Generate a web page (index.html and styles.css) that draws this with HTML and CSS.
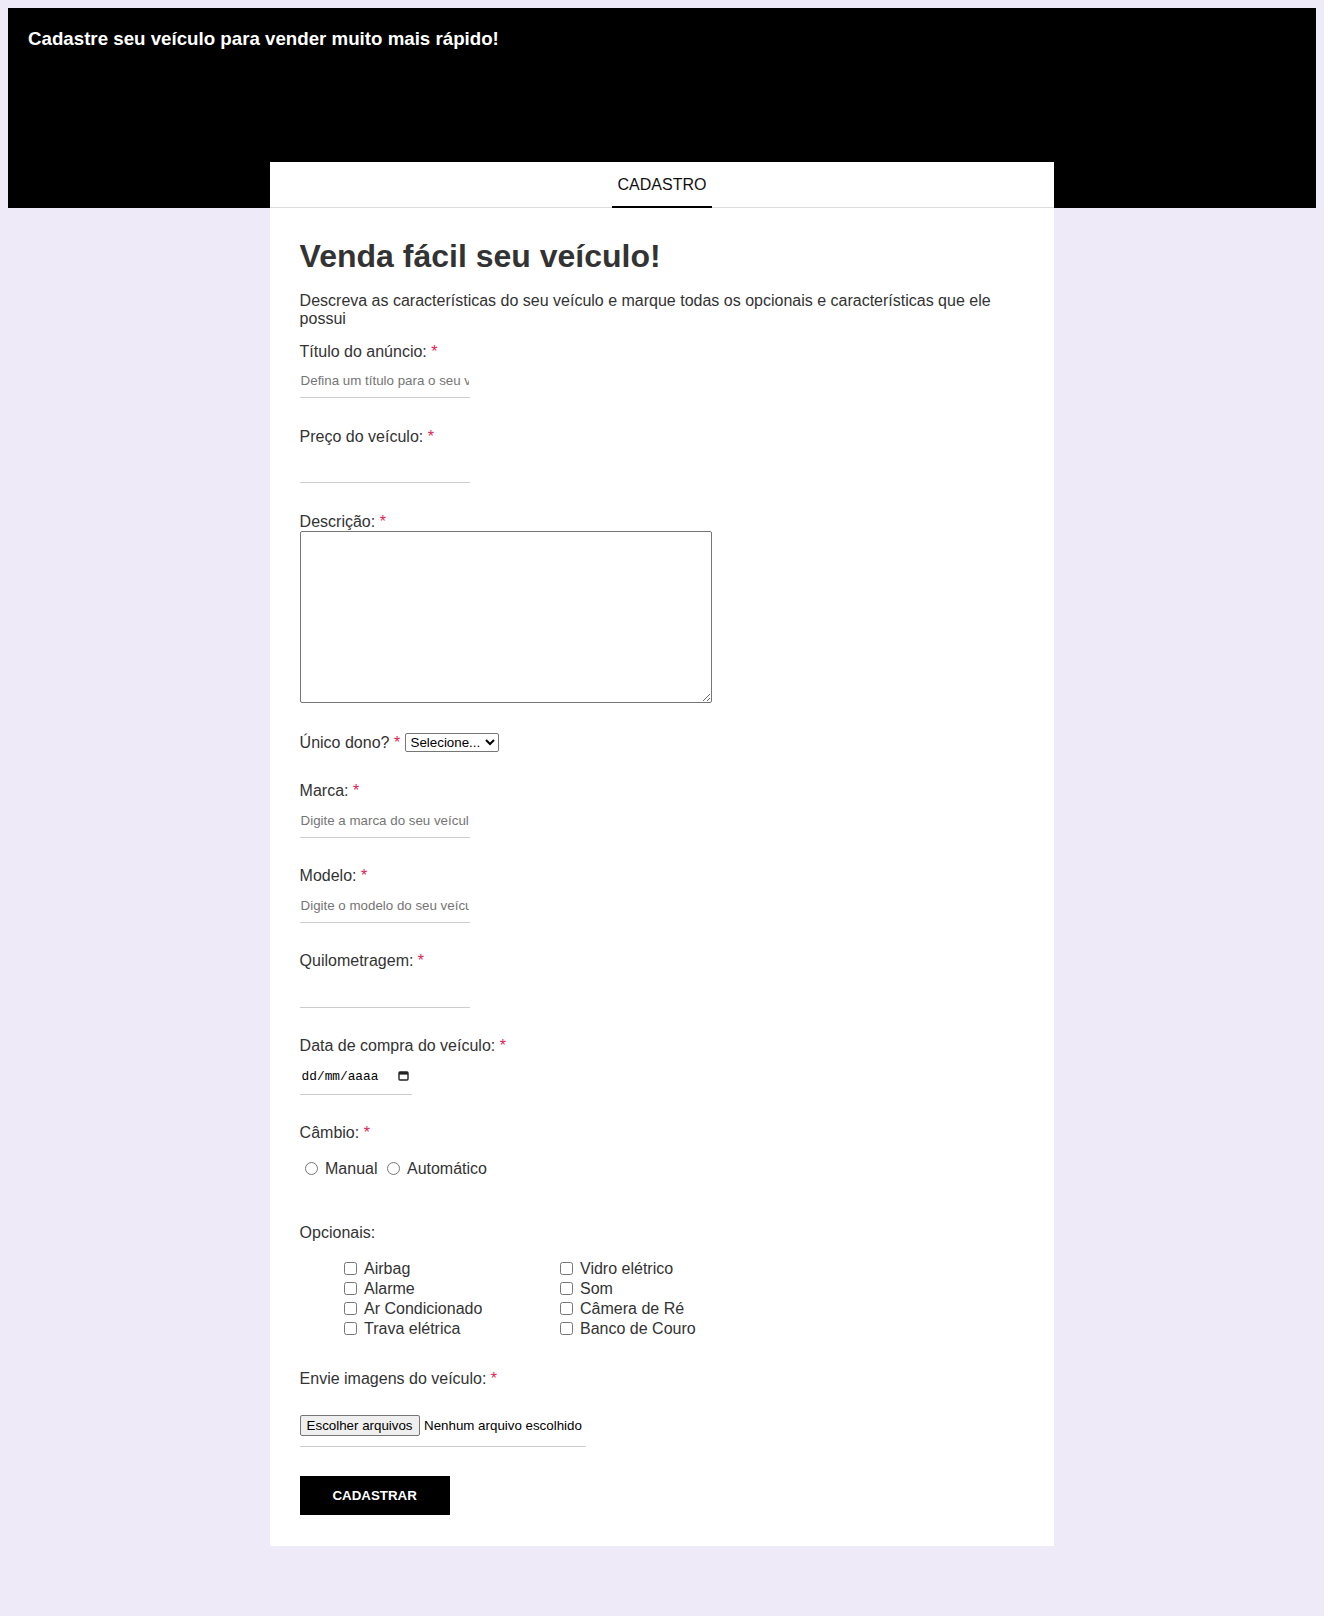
FILE: index.html
```html
<!DOCTYPE html>
<html lang="pt-BR">
<head>
<meta charset="utf-8">
<title>Cadastro de veículo</title>
<link rel="stylesheet" href="styles.css">
</head>
<body>
<header class="top">
  <h3 class="top-title">Cadastre seu veículo para vender muito mais rápido!</h3>
</header>
<main class="card">
  <nav class="tabs"><div class="tab">CADASTRO</div></nav>
  <form class="content">
    <h1 class="title">Venda fácil seu veículo!</h1>
    <p class="intro">Descreva as características do seu veículo e marque todas os opcionais e características que ele possui</p>

    <div class="field">
      <label class="lbl">Título do anúncio: <span class="req">*</span></label>
      <input class="txt" type="text" placeholder="Defina um título para o seu veículo">
    </div>

    <div class="field">
      <label class="lbl">Preço do veículo: <span class="req">*</span></label>
      <input class="txt" type="text">
    </div>

    <div class="field">
      <label class="lbl">Descrição: <span class="req">*</span></label>
      <textarea class="area"></textarea>
    </div>

    <div class="field row">
      <label class="lbl-inline">Único dono? <span class="req">*</span></label>
      <select class="sel"><option>Selecione...</option><option>Sim</option><option>Não</option></select>
    </div>

    <div class="field">
      <label class="lbl">Marca: <span class="req">*</span></label>
      <input class="txt" type="text" placeholder="Digite a marca do seu veículo">
    </div>

    <div class="field">
      <label class="lbl">Modelo: <span class="req">*</span></label>
      <input class="txt" type="text" placeholder="Digite o modelo do seu veículo">
    </div>

    <div class="field">
      <label class="lbl">Quilometragem: <span class="req">*</span></label>
      <input class="txt" type="text">
    </div>

    <div class="field">
      <label class="lbl">Data de compra do veículo: <span class="req">*</span></label>
      <div class="date">
        <span class="date-txt">dd/mm/aaaa</span>
        <svg class="cal" width="11" height="10" viewBox="0 0 11 10"><rect x="1" y="1" width="9" height="8" rx="1" fill="none" stroke="#222" stroke-width="1.4"/><rect x="1" y="1" width="9" height="2.6" fill="#222"/></svg>
      </div>
    </div>

    <div class="field">
      <label class="lbl">Câmbio: <span class="req">*</span></label>
      <div class="radios">
        <label class="ropt"><input type="radio" name="cambio"><span class="otext">Manual</span></label>
        <label class="ropt"><input type="radio" name="cambio"><span class="otext">Automático</span></label>
      </div>
    </div>

    <div class="field">
      <label class="lbl">Opcionais:</label>
      <div class="opts">
        <label class="opt"><input type="checkbox"><span class="otext">Airbag</span></label>
        <label class="opt"><input type="checkbox"><span class="otext">Alarme</span></label>
        <label class="opt"><input type="checkbox"><span class="otext">Ar Condicionado</span></label>
        <label class="opt"><input type="checkbox"><span class="otext">Trava elétrica</span></label>
        <label class="opt"><input type="checkbox"><span class="otext">Vidro elétrico</span></label>
        <label class="opt"><input type="checkbox"><span class="otext">Som</span></label>
        <label class="opt"><input type="checkbox"><span class="otext">Câmera de Ré</span></label>
        <label class="opt"><input type="checkbox"><span class="otext">Banco de Couro</span></label>
      </div>
    </div>

    <div class="field">
      <label class="lbl">Envie imagens do veículo: <span class="req">*</span></label>
      <div class="file">
        <span class="file-btn">Escolher arquivos</span>
        <span class="file-txt">Nenhum arquivo escolhido</span>
      </div>
    </div>

    <button class="submit" type="button">CADASTRAR</button>
  </form>
</main>
</body>
</html>
```

FILE: styles.css
```css
body {
  margin: 8px;
  background: #eeeaf8;
  font-family: "Liberation Sans", Arial, sans-serif;
  font-size: 16px;
  color: #333;
}

.top {
  background: #000;
  height: 200px;
  box-sizing: border-box;
  padding: 20px;
}

.top-title {
  margin: 0;
  color: #fff;
  font-size: 18.72px;
  font-weight: bold;
}

.card {
  width: 60%;
  margin: -46px auto 0;
  background: #fff;
}

.tabs {
  display: flex;
  justify-content: center;
  border-bottom: 1px solid #dcdcdc;
}

.tab {
  width: 100px;
  text-align: center;
  padding: 14px 0 12px;
  line-height: 18px;
  font-size: 16px;
  color: #111;
  border-bottom: 2px solid #000;
  margin-bottom: -1px;
}

.content {
  padding: 30px 30px 31px;
}

.title {
  margin: 0;
  font-size: 32px;
  line-height: 37px;
  font-weight: bold;
  color: #333;
}

.intro {
  margin: 17px 0 14px;
  line-height: 18.4px;
}

.field {
  display: flow-root;
  margin-bottom: 29.6px;
}

.lbl {
  display: block;
  line-height: 18.4px;
}

.req {
  color: #e2214f;
}

.txt {
  display: block;
  box-sizing: border-box;
  width: 170px;
  height: 37px;
  padding: 12px 1px 9px;
  border: 0;
  border-bottom: 1px solid #cccccc;
  font-family: "Liberation Sans", Arial, sans-serif;
  font-size: 13.33px;
  color: #000;
  background: transparent;
  outline: none;
}

.txt::placeholder {
  color: #757575;
}

.area {
  display: block;
  box-sizing: border-box;
  width: 412px;
  height: 172px;
  margin: 0;
  border: 1px solid #767676;
  border-radius: 2px;
  font-family: "Liberation Sans", Arial, sans-serif;
}

.row {
  display: flex;
  align-items: center;
  gap: 4.45px;
  height: 20px;
}

.lbl-inline {
  line-height: 18.4px;
}

.sel {
  box-sizing: border-box;
  width: 94px;
  height: 19px;
  padding: 0 0 0 1px;
  font-family: "Liberation Sans", Arial, sans-serif;
  font-size: 13.33px;
  color: #000;
  background: #fff;
  border: 1px solid #767676;
  border-radius: 2px;
}

.date {
  display: flex;
  align-items: center;
  box-sizing: border-box;
  width: 112px;
  height: 39px;
  padding: 12px 3px 9px 2px;
  border-bottom: 1px solid #cccccc;
}

.date-txt {
  font-family: "Liberation Mono", "DejaVu Sans Mono", monospace;
  font-size: 12.8px;
  color: #000;
}

.cal {
  margin-left: auto;
}

.radios {
  display: flex;
  align-items: center;
  height: 20px;
  margin: 16px 0;
}

.ropt {
  display: flex;
  align-items: center;
  margin-right: 4px;
}

.ropt input {
  width: 13px;
  height: 13px;
  margin: 0 3px 0 5px;
}

.otext {
  padding-left: 4.45px;
}

.opts {
  display: grid;
  grid-template-columns: 216px 216px;
  grid-template-rows: repeat(4, 20px);
  grid-auto-flow: column;
  margin: 16px 0 2px;
  padding-left: 40px;
}

.opt {
  display: flex;
  align-items: center;
  height: 20px;
}

.opt input {
  width: 13px;
  height: 13px;
  margin: 0 3px 0 4px;
}

.file {
  display: flex;
  align-items: center;
  box-sizing: border-box;
  width: 286px;
  padding: 26px 0 10px;
  border-bottom: 1px solid #cccccc;
  font-size: 13.33px;
  color: #000;
}

.file-btn {
  box-sizing: border-box;
  height: 21px;
  line-height: 19px;
  padding: 0 6px;
  background: #efefef;
  border: 1px solid #767676;
  border-radius: 2px;
}

.file-txt {
  margin-left: 4.5px;
}

.submit {
  display: block;
  width: 150px;
  height: 39px;
  margin-top: 1px;
  border: 0;
  background: #000;
  color: #fff;
  font-family: "Liberation Sans", Arial, sans-serif;
  font-size: 13.33px;
  font-weight: bold;
  cursor: pointer;
}
```
